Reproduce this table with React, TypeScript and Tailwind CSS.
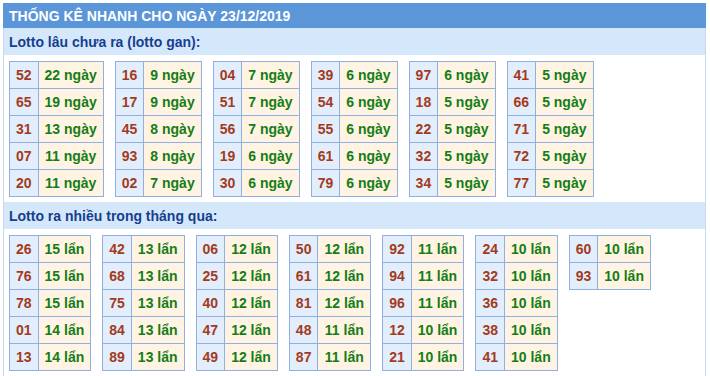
type Row = [string, string];

const gan: Row[][] = [
  [["52", "22"], ["65", "19"], ["31", "13"], ["07", "11"], ["20", "11"]],
  [["16", "9"], ["17", "9"], ["45", "8"], ["93", "8"], ["02", "7"]],
  [["04", "7"], ["51", "7"], ["56", "7"], ["19", "6"], ["30", "6"]],
  [["39", "6"], ["54", "6"], ["55", "6"], ["61", "6"], ["79", "6"]],
  [["97", "6"], ["18", "5"], ["22", "5"], ["32", "5"], ["34", "5"]],
  [["41", "5"], ["66", "5"], ["71", "5"], ["72", "5"], ["77", "5"]],
];

const nhieu: Row[][] = [
  [["26", "15"], ["76", "15"], ["78", "15"], ["01", "14"], ["13", "14"]],
  [["42", "13"], ["68", "13"], ["75", "13"], ["84", "13"], ["89", "13"]],
  [["06", "12"], ["25", "12"], ["40", "12"], ["47", "12"], ["49", "12"]],
  [["50", "12"], ["61", "12"], ["81", "12"], ["48", "11"], ["87", "11"]],
  [["92", "11"], ["94", "11"], ["96", "11"], ["12", "10"], ["21", "10"]],
  [["24", "10"], ["32", "10"], ["36", "10"], ["38", "10"], ["41", "10"]],
  [["60", "10"], ["93", "10"]],
];

function StatTable({ rows, unit }: { rows: Row[]; unit: string }) {
  return (
    <table className="border-collapse">
      <tbody>
        {rows.map(([num, count]) => (
          <tr key={num} className="h-[27px]">
            <td className="border border-[#8fb0e0] bg-[#e3eefc] px-[6px] text-center text-[#a23b1d]">{num}</td>
            <td className="border border-[#8fb0e0] bg-[#fff4e3] px-[6px] text-center text-[#157d15]">
              {count} {unit}
            </td>
          </tr>
        ))}
      </tbody>
    </table>
  );
}

function Section({ title, tables, unit }: { title: string; tables: Row[][]; unit: string }) {
  return (
    <div>
      <div className="flex h-[27px] items-center bg-[#d5e8fb] pl-[5px] text-[#163f8e]">{title}</div>
      <div className="flex items-start gap-x-[11px] pl-[5px] pt-[6px] pb-[5px]">
        {tables.map((rows, i) => (
          <StatTable key={i} rows={rows} unit={unit} />
        ))}
      </div>
    </div>
  );
}

export default function App() {
  return (
    <div className="min-h-[376px] bg-white px-[3px] pt-[3px] font-['Liberation_Sans',Arial,sans-serif] text-[14px] font-bold leading-4">
      <div className="w-[703px]">
        <div className="flex h-[25px] items-center bg-[#5b96d9] pl-[6px] text-white">
          THỐNG KÊ NHANH CHO NGÀY 23/12/2019
        </div>
        <div className="min-h-[360px] border-x border-[#c9d8ea]">
          <Section title="Lotto lâu chưa ra (lotto gan):" tables={gan} unit="ngày" />
          <Section title="Lotto ra nhiều trong tháng qua:" tables={nhieu} unit="lẩn" />
        </div>
      </div>
    </div>
  );
}
